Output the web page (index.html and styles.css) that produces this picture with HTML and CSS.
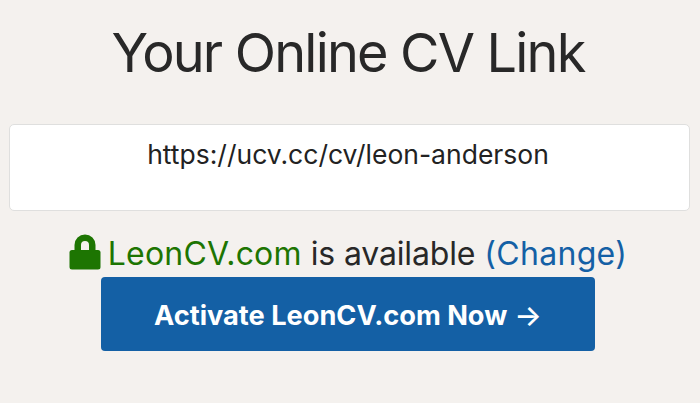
FILE: index.html
```html
<!DOCTYPE html>
<html lang="en">
  <head>
    <meta charset="UTF-8" />
    <meta name="viewport" content="width=device-width, initial-scale=1.0" />
    <title>Your Online CV Link</title>
    <link rel="stylesheet" href="styles.css">
  </head>
  <body>
    <div class="page">
      <h1 class="title">Your Online CV Link</h1>
      <div class="link-box">https://ucv.cc/cv/leon-anderson</div>
      <div class="status">
        <svg class="lock" viewBox="0 0 32 36" aria-hidden="true">
          <path d="M5.5 18V11a10.5 10.5 0 0 1 21 0v7h-6.500V11a4 4 0 0 0-8 0v7z" fill="#1d7502" />
          <rect x="0.500" y="16" width="31" height="19.500" rx="2.500" fill="#1d7502" />
        </svg>
        <span class="domain">LeonCV.com</span>
        <span class="available">is available</span>
        <a href="#" class="change">(Change)</a>
      </div>
      <a href="#" class="activate">Activate LeonCV.com Now <span class="arrow">→</span></a>
    </div>
  </body>
</html>
```

FILE: styles.css
```css
body {
  margin: 0;
  background-color: #f4f1ee;
  font-family: Inter, "Liberation Sans", sans-serif;
  color: #282828;
}
.page {
  height: 403px;
  padding: 0 9px;
  box-sizing: border-box;
  display: flex;
  flex-direction: column;
  align-items: center;
  overflow: hidden;
}
.title {
  margin: 20px 4px 0 0;
  height: 104px;
  font-size: 54px;
  line-height: 66px;
  font-weight: 400;
  letter-spacing: -1.8px;
}
.link-box {
  width: 681px;
  height: 87px;
  margin-right: 1px;
  box-sizing: border-box;
  padding: 12px 3px 0 0;
  background-color: white;
  border: 1px solid #dfdfde;
  border-radius: 5px;
  text-align: center;
  font-size: 26.5px;
  line-height: 34px;
  color: #222;
}
.status {
  margin: 23px 4px 0 0;
  height: 43px;
  display: flex;
  align-items: flex-start;
  gap: 9px;
  font-size: 32px;
  line-height: 40px;
}
.lock {
  width: 32px;
  height: 36px;
  margin: 0 -2px 0 0;
}
.domain {
  color: #1d7502;
  letter-spacing: 0.2px;
}
.available {
  letter-spacing: -0.15px;
}
.change {
  color: #1460a5;
  text-decoration: none;
  letter-spacing: 0.3px;
}
.activate {
  width: 494px;
  height: 74px;
  margin-right: 4px;
  padding-top: 2px;
  box-sizing: border-box;
  display: flex;
  align-items: center;
  justify-content: center;
  gap: 7px;
  background-color: #1460a5;
  border-radius: 4px;
  color: white;
  font-size: 27.2px;
  font-weight: 700;
  text-decoration: none;
}
.arrow {
  font-size: 29px;
  font-weight: 500;
}
```
